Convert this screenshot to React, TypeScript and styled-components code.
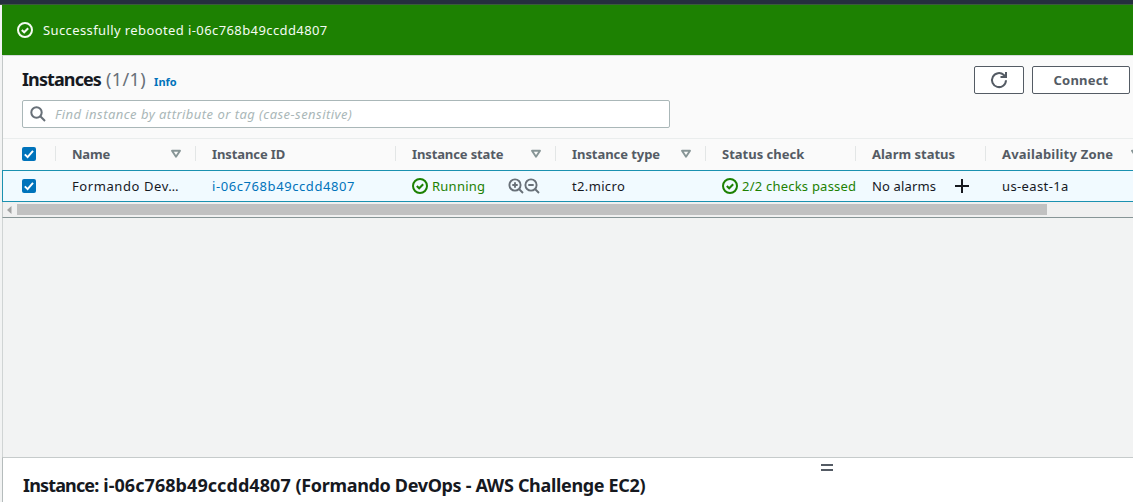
import React from "react";
import styled, { createGlobalStyle, css } from "styled-components";

const GlobalStyle = createGlobalStyle`
  * { box-sizing: border-box; }
  html, body { margin: 0; padding: 0; overflow: hidden; }
  body {
    background: #f2f3f3;
    color: #16191f;
    font-family: "Noto Sans", sans-serif;
    font-size: 13px;
    line-height: 20px;
  }
`;

const Page = styled.div`
  display: flex;
  flex-direction: column;
  width: 1133px;
  height: 502px;
  overflow: hidden;
`;

const TopBar = styled.div`
  flex: none;
  height: 5px;
  background: #252f3e;
  border-bottom: 1px solid #3c5a3c;
`;

const Main = styled.main`
  flex: 1;
  min-height: 0;
  display: flex;
  flex-direction: column;
  margin-left: 2px;
`;

const Flash = styled.div`
  flex: none;
  display: flex;
  align-items: center;
  gap: 10px;
  height: 50px;
  padding: 0 15px;
  background: #1d8102;
  color: #f4fbf2;
`;

const Label = styled.span<{ $spacing?: number }>`
  letter-spacing: ${(p) => p.$spacing ?? 0}px;
  white-space: nowrap;
`;

const Panel = styled.section`
  flex: none;
  height: 163px;
  background: #fafafa;
  border-top: 1px solid #d5dbdb;
  border-left: 1px solid #c3c8c8;
  border-bottom: 1px solid #879596;
`;

const PanelHeader = styled.header`
  display: flex;
  justify-content: space-between;
  height: 44px;
  padding: 10px 3px 0 19px;
`;

const Title = styled.h1`
  display: flex;
  align-items: baseline;
  margin: 0;
  font-size: 18px;
  line-height: 26px;
  font-weight: 700;
`;

const Count = styled.span`
  margin-left: 5px;
  font-weight: 400;
  color: #687078;
  letter-spacing: 0.4px;
`;

const InfoLink = styled.a`
  margin-left: 8px;
  font-size: 11px;
  color: #0073bb;
`;

const Actions = styled.div`
  display: flex;
  gap: 8px;
`;

const Button = styled.button<{ $width: number }>`
  display: flex;
  align-items: center;
  justify-content: center;
  width: ${(p) => p.$width}px;
  height: 28px;
  padding: 0;
  background: #fff;
  border: 1px solid #545b64;
  border-radius: 2px;
  color: #545b64;
  font: 700 13px/20px "Noto Sans", sans-serif;
`;

const Search = styled.div`
  display: flex;
  align-items: center;
  gap: 9px;
  width: 648px;
  height: 28px;
  margin-left: 19px;
  padding: 0 7px;
  background: #fff;
  border: 1px solid #aab7b8;
  border-radius: 2px;
  color: #aab7b8;
  font-style: italic;
`;

const rowGrid = css`
  display: grid;
  grid-template-columns: 52px 140px 200px 160px 150px 150px 130px 170px;
`;

const HeadRow = styled.div`
  ${rowGrid}
  height: 32px;
  margin-top: 10px;
  padding-bottom: 2px;
  align-items: center;
  border-top: 1px solid #eaeded;
  color: #545b64;
  font-weight: 700;
`;

const HeadCell = styled.div<{ $check?: boolean }>`
  display: flex;
  align-items: center;
  justify-content: space-between;
  height: 15px;
  padding: 0 13px 0 ${(p) => (p.$check ? 19 : 16)}px;
  border-left: ${(p) => (p.$check ? 0 : 1)}px solid #e3e6e6;
`;

const BodyRow = styled.div`
  ${rowGrid}
  height: 32px;
  margin-left: -1px;
  align-items: center;
  background: #f1faff;
  border: 1px solid #1b91b0;
  border-right: 0;
`;

const Cell = styled.div<{ $check?: boolean; $tone?: "link" | "success" }>`
  display: flex;
  align-items: center;
  height: 30px;
  padding-left: ${(p) => (p.$check ? 19 : 17)}px;
  color: ${(p) => (p.$tone === "link" ? "#0073bb" : p.$tone === "success" ? "#1d8102" : "#16191f")};
`;

const Status = styled.span`
  display: flex;
  align-items: center;
  gap: 4px;
`;

const ZoomPair = styled.span`
  display: flex;
  margin-left: 23px;
`;

const PlusIcon = styled.svg`
  flex: none;
  margin-left: 19px;
`;

const ScrollBar = styled.div`
  display: flex;
  align-items: center;
  height: 15px;
  background: #f0f0f0;
`;

const ScrollArrow = styled.svg`
  flex: none;
  margin: 0 5px 0 4px;
`;

const Thumb = styled.div`
  width: 1030px;
  height: 11px;
  background: #c1c1c1;
`;

const Gap = styled.div`
  flex: 1;
  border-left: 1px solid #d0d4d4;
`;

const SplitPanel = styled.section`
  flex: none;
  height: 45px;
  display: flex;
  flex-direction: column;
  background: #fff;
  border-top: 1px solid #c6cbcb;
  border-left: 1px solid #b5bcbc;
`;

const Handle = styled.div`
  align-self: center;
  width: 12px;
  height: 7px;
  margin: 6px 0 0 517px;
  border: solid #545b64;
  border-width: 2px 0;
`;

const SplitTitle = styled.h2`
  margin: 1px 0 0 20px;
  font-size: 18px;
  line-height: 26px;
  font-weight: 700;
  white-space: nowrap;
`;

const CheckCircle = () => (
  <svg width="16" height="16" viewBox="0 0 16 16" fill="none" stroke="currentColor" strokeWidth="2">
    <circle cx="8" cy="8" r="7" />
    <path d="M4.8 8l2.4 2.3 4-4.1" />
  </svg>
);

const Checkbox = () => (
  <svg width="14" height="14" viewBox="0 0 14 14">
    <rect width="14" height="14" rx="2" fill="#0073bb" />
    <path d="M2.8 7.4l2.8 2.7 5.4-6.2" fill="none" stroke="#fff" strokeWidth="2" />
  </svg>
);

const SortIcon = () => (
  <svg width="12" height="10" viewBox="0 0 12 10">
    <path d="M2 1.7h8L6 7.8z" fill="none" stroke="#879596" strokeWidth="1.9" strokeLinejoin="round" />
  </svg>
);

const Magnifier = ({ plus }: { plus?: boolean }) => (
  <svg width="16" height="16" viewBox="0 0 16 16" fill="none" stroke="#687078" strokeWidth="1.9">
    <circle cx="7" cy="7" r="5.6" />
    <path d="M11 11l4 4M4.3 7h5.4" />
    {plus && <path d="M7 4.3v5.4" />}
  </svg>
);

const columns: { name: string; spacing?: number; sort?: boolean }[] = [
  { name: "Name", spacing: -0.2, sort: true },
  { name: "Instance ID", spacing: -0.1 },
  { name: "Instance state", spacing: -0.12, sort: true },
  { name: "Instance type", spacing: -0.06, sort: true },
  { name: "Status check" },
  { name: "Alarm status" },
  { name: "Availability Zone", spacing: 0.2, sort: true },
];

export default function App() {
  return (
    <Page>
      <GlobalStyle />
      <TopBar />
      <Main>
        <Flash>
          <CheckCircle />
          <Label $spacing={0.4}>Successfully rebooted i-06c768b49ccdd4807</Label>
        </Flash>
        <Panel>
          <PanelHeader>
            <Title>
              <Label $spacing={-0.9}>Instances</Label>
              <Count>(1/1)</Count>
              <InfoLink>Info</InfoLink>
            </Title>
            <Actions>
              <Button $width={50} aria-label="Refresh">
                <svg width="18" height="18" viewBox="0 0 18 18" fill="none" stroke="currentColor" strokeWidth="2">
                  <path d="M16 9.2A7 7 0 1 1 13.8 4L16 6" />
                  <path d="M16 1v5h-5.5" />
                </svg>
              </Button>
              <Button $width={98}>
                <Label $spacing={0.2}>Connect</Label>
              </Button>
            </Actions>
          </PanelHeader>
          <Search>
            <svg width="16" height="16" viewBox="0 0 16 16" fill="none" stroke="#687078" strokeWidth="2">
              <circle cx="6.5" cy="6.5" r="5.2" />
              <path d="M10.3 10.3l4.7 4.7" />
            </svg>
            <Label $spacing={0.46}>Find instance by attribute or tag (case-sensitive)</Label>
          </Search>
          <HeadRow>
            <HeadCell $check>
              <Checkbox />
            </HeadCell>
            {columns.map((c) => (
              <HeadCell key={c.name}>
                <Label $spacing={c.spacing}>{c.name}</Label>
                {c.sort && <SortIcon />}
              </HeadCell>
            ))}
          </HeadRow>
          <BodyRow>
            <Cell $check>
              <Checkbox />
            </Cell>
            <Cell>
              <Label $spacing={0.58}>Formando Dev…</Label>
            </Cell>
            <Cell $tone="link">
              <Label $spacing={0.58}>i-06c768b49ccdd4807</Label>
            </Cell>
            <Cell $tone="success">
              <Status>
                <CheckCircle />
                <Label $spacing={0.25}>Running</Label>
              </Status>
              <ZoomPair>
                <Magnifier plus />
                <Magnifier />
              </ZoomPair>
            </Cell>
            <Cell>
              <Label $spacing={0.35}>t2.micro</Label>
            </Cell>
            <Cell $tone="success">
              <Status>
                <CheckCircle />
                <Label $spacing={0.22}>2/2 checks passed</Label>
              </Status>
            </Cell>
            <Cell>
              <Label $spacing={0.15}>No alarms</Label>
              <PlusIcon width="14" height="14" viewBox="0 0 14 14" stroke="#16191f" strokeWidth="2">
                <path d="M7 0v14M0 7h14" />
              </PlusIcon>
            </Cell>
            <Cell>
              <Label $spacing={0.38}>us-east-1a</Label>
            </Cell>
          </BodyRow>
          <ScrollBar>
            <ScrollArrow width="5" height="8" viewBox="0 0 5 8">
              <path d="M4.5 0v8L0 4z" fill="#a3a3a3" />
            </ScrollArrow>
            <Thumb />
          </ScrollBar>
        </Panel>
        <Gap />
        <SplitPanel>
          <Handle />
          <SplitTitle>
            <Label $spacing={-0.85}>Instance:</Label>
            <Label $spacing={0.06}> i-06c768b49ccdd4807 </Label>
            <Label $spacing={-0.33}>(Formando DevOps - AWS Challenge EC2)</Label>
          </SplitTitle>
        </SplitPanel>
      </Main>
    </Page>
  );
}
